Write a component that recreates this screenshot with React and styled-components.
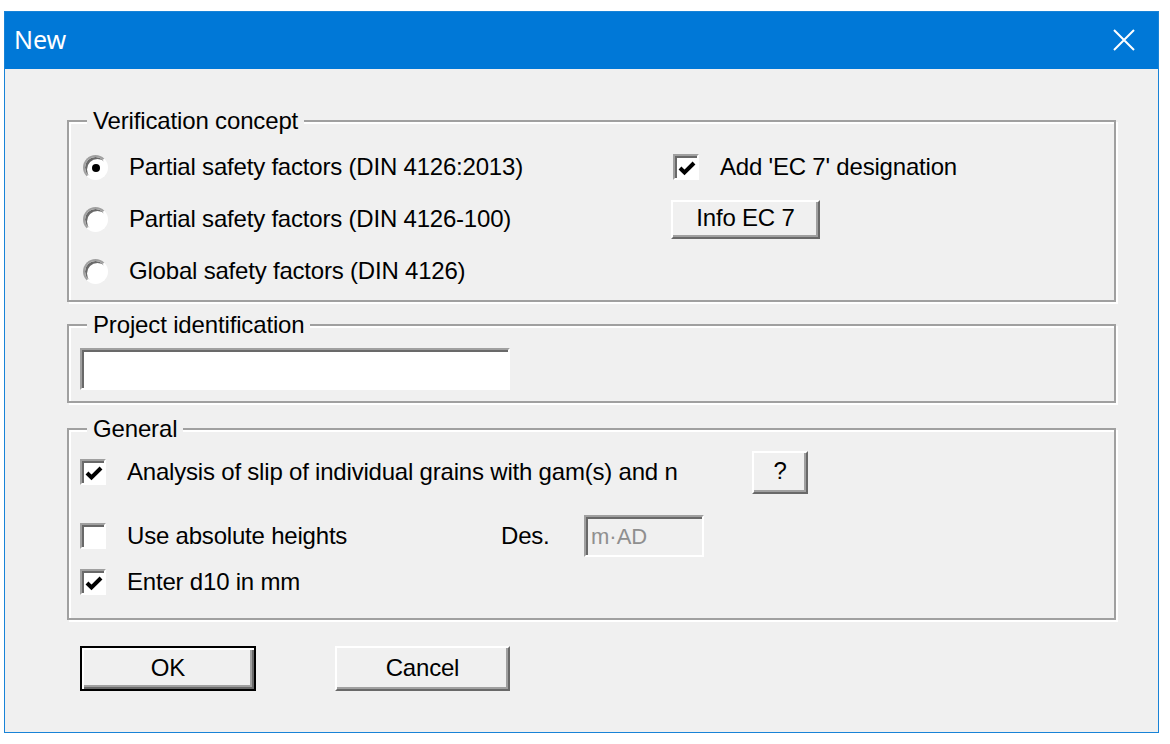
import React from 'react'
import styled, { createGlobalStyle } from 'styled-components'

const GlobalStyle = createGlobalStyle`
    body{
        margin: 0;
        background: #ffffff;
        font-family: "Liberation Sans", Arial, sans-serif;
    }
`

function CheckMark() {
    return (
        <svg width="18" height="16" viewBox="0 0 18 16">
            <path d="M2 8 L6.5 12.5 L16 3" fill="none" stroke="#000" strokeWidth="4" />
        </svg>
    )
}

function CloseIcon() {
    return (
        <svg width="22" height="22" viewBox="0 0 22 22">
            <path d="M1 1 L21 21 M21 1 L1 21" stroke="#fff" strokeWidth="2" />
        </svg>
    )
}

function App() {
    return (
    <Window>
        <GlobalStyle />
        <TitleBar>
            <Title>New</Title>
            <CloseButton><CloseIcon /></CloseButton>
        </TitleBar>
        <Body>
            <Group $h={195}>
                <Legend>Verification concept</Legend>
                <ConceptGrid>
                    <Option>
                        <Radio $on />
                        <Label>Partial safety factors (DIN 4126:2013)</Label>
                    </Option>
                    <Option $indent={2}>
                        <Box><CheckMark /></Box>
                        <Label>Add 'EC 7' designation</Label>
                    </Option>
                    <Option>
                        <Radio />
                        <Label>Partial safety factors (DIN 4126-100)</Label>
                    </Option>
                    <Option>
                        <Button $w={149} $h={39}>Info EC 7</Button>
                    </Option>
                    <Option>
                        <Radio />
                        <Label>Global safety factors (DIN 4126)</Label>
                    </Option>
                </ConceptGrid>
            </Group>

            <Group $h={92} $mt={9}>
                <Legend>Project identification</Legend>
                <ProjectArea>
                    <TextField $w={430} />
                </ProjectArea>
            </Group>

            <Group $h={205} $mt={12}>
                <Legend>General</Legend>
                <GeneralArea>
                    <Row $h={44}>
                        <Option $w={672}>
                            <Box><CheckMark /></Box>
                            <Label>Analysis of slip of individual grains with gam(s) and n</Label>
                        </Option>
                        <Button $w={56} $h={43}>?</Button>
                    </Row>
                    <Row $h={44} $mt={20}>
                        <Option $w={421}>
                            <Box />
                            <Label>Use absolute heights</Label>
                        </Option>
                        <FieldLabel>Des.</FieldLabel>
                        <TextField $w={120} $disabled>m·AD</TextField>
                    </Row>
                    <Row $h={32} $mt={8}>
                        <Option>
                            <Box><CheckMark /></Box>
                            <Label>Enter d10 in mm</Label>
                        </Option>
                    </Row>
                </GeneralArea>
            </Group>

            <Actions>
                <Button $w={176} $h={45} $default>OK</Button>
                <Button $w={175} $h={45}>Cancel</Button>
            </Actions>
        </Body>
    </Window>
    );
}

export default App

const Window = styled.div`
    margin: 11px 0 0 4px;
    width: 1155px;
    height: 722px;
    box-sizing: border-box;
    border: 1px solid #1883d7;
    display: flex;
    flex-direction: column;
`

const TitleBar = styled.div`
    height: 57px;
    background: #0078d7;
    display: flex;
    align-items: center;
    justify-content: space-between;
    padding: 0 23px 0 9px;
`

const Title = styled.span`
    font-family: "Noto Sans", "Open Sans", sans-serif;
    font-size: 25px;
    color: #ffffff;
    margin-top: -3px;
`

const CloseButton = styled.div`
    display: flex;
    align-items: center;
    margin-top: -1px;
`

const Body = styled.div`
    flex: 1;
    background: #f0f0f0;
    padding: 38px 0 0 62px;
    display: flex;
    flex-direction: column;
`

const Group = styled.fieldset`
    margin: ${p => p.$mt || 0}px 0 0 0;
    padding: 0;
    width: 1049px;
    height: ${p => p.$h}px;
    box-sizing: border-box;
    min-inline-size: 0;
    border: 2px solid #a0a0a0;
    box-shadow: inset 2px 2px 0 #ffffff, 2px 2px 0 #ffffff;
`

const Legend = styled.legend`
    margin-left: 18px;
    padding: 0 6px;
    font-size: 24px;
    line-height: 28px;
    letter-spacing: -0.15px;
    color: #000;
    background: #f0f0f0;
`

const ConceptGrid = styled.div`
    display: grid;
    grid-template-columns: 588px 1fr;
    grid-auto-rows: 52px;
    padding: 6px 0 0 14px;
`

const ProjectArea = styled.div`
    padding: 9px 0 0 11px;
`

const GeneralArea = styled.div`
    padding: 7px 0 0 11px;
    display: flex;
    flex-direction: column;
`

const Row = styled.div`
    display: flex;
    align-items: center;
    height: ${p => p.$h}px;
    margin-top: ${p => p.$mt || 0}px;
`

const Option = styled.div`
    display: flex;
    align-items: center;
    gap: 21px;
    padding-left: ${p => p.$indent || 0}px;
    width: ${p => (p.$w ? `${p.$w}px` : 'auto')};
    flex-shrink: 0;
`

const Label = styled.span`
    font-size: 24px;
    letter-spacing: -0.2px;
    color: #000;
    white-space: nowrap;
`

const FieldLabel = styled(Label)`
    width: 83px;
`

const Radio = styled.span`
    width: 25px;
    height: 25px;
    box-sizing: border-box;
    border-radius: 50%;
    background: #ffffff;
    border: 2px solid;
    border-color: #a0a0a0 #ffffff #ffffff #a0a0a0;
    box-shadow: inset 2px 2px 0 #696969;
    display: flex;
    align-items: center;
    justify-content: center;
    flex-shrink: 0;

    &::after{
        content: '';
        width: 8px;
        height: 8px;
        border-radius: 50%;
        background: #000;
        display: ${p => (p.$on ? 'block' : 'none')};
        margin: 1px 0 0 1px;
    }
`

const Box = styled.span`
    width: 26px;
    height: 26px;
    box-sizing: border-box;
    background: #ffffff;
    border: 2px solid;
    border-color: #a0a0a0 #ffffff #ffffff #a0a0a0;
    box-shadow: inset 2px 2px 0 #696969;
    display: flex;
    align-items: center;
    justify-content: center;
    padding: 2px 0 0 2px;
    flex-shrink: 0;
`

const Button = styled.div`
    width: ${p => p.$w}px;
    height: ${p => p.$h}px;
    box-sizing: border-box;
    background: #f0f0f0;
    border: 2px solid;
    border-color: ${p => (p.$default ? '#000 #000 #000 #000' : '#ffffff #696969 #696969 #ffffff')};
    box-shadow: ${p => (p.$default
        ? 'inset 2px 2px 0 #ffffff, inset -2px -2px 0 #696969, inset -4px -4px 0 #a0a0a0'
        : 'inset -2px -2px 0 #a0a0a0')};
    display: flex;
    align-items: center;
    justify-content: center;
    font-size: 24px;
    letter-spacing: -0.2px;
    color: #000;
    padding-bottom: 2px;
    flex-shrink: 0;
`

const TextField = styled.div`
    width: ${p => p.$w}px;
    height: 42px;
    box-sizing: border-box;
    background: ${p => (p.$disabled ? '#f0f0f0' : '#ffffff')};
    border: 2px solid;
    border-color: #a0a0a0 #ffffff #ffffff #a0a0a0;
    box-shadow: inset 2px 2px 0 #696969;
    font-size: 22px;
    color: #8f8f8f;
    display: flex;
    align-items: center;
    padding: 2px 0 0 5px;
`

const Actions = styled.div`
    display: flex;
    gap: 79px;
    margin: 26px 0 0 13px;
`
